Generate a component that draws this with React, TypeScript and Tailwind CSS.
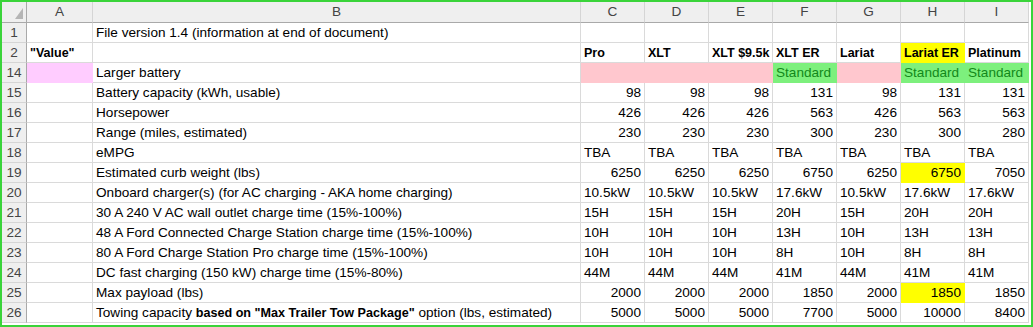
import React from "react";

type Cell = { v?: string; fill?: string; bold?: boolean; right?: boolean; green?: boolean };

const PINK = "#ffc7ce";
const YEL = "#ffff00";
const GRN = "#7df07d";

const cols = ["A", "B", "C", "D", "E", "F", "G", "H", "I"];

const num = (arr: (string | number)[], hl?: number): Cell[] =>
  arr.map((x, i) => ({ v: String(x), right: true, fill: i === hl ? YEL : undefined }));
const txt = (arr: string[]): Cell[] => arr.map((x) => ({ v: x }));

const rows: { n: number; a?: Cell; b: React.ReactNode; cells: Cell[] }[] = [
  { n: 1, b: "File version 1.4 (information at end of document)", cells: Array(7).fill({}) },
  {
    n: 2,
    a: { v: '"Value"', bold: true },
    b: "",
    cells: ["Pro", "XLT", "XLT $9.5k", "XLT ER", "Lariat", "Lariat ER", "Platinum"].map((x) => ({
      v: x,
      bold: true,
      fill: x === "Lariat ER" ? YEL : undefined,
    })),
  },
  {
    n: 14,
    a: { fill: "#ffccff" },
    b: "Larger battery",
    cells: [
      { fill: PINK },
      { fill: PINK },
      { fill: PINK },
      { v: "Standard", fill: GRN, green: true },
      { fill: PINK },
      { v: "Standard", fill: GRN, green: true },
      { v: "Standard", fill: GRN, green: true },
    ],
  },
  { n: 15, b: "Battery capacity (kWh, usable)", cells: num([98, 98, 98, 131, 98, 131, 131]) },
  { n: 16, b: "Horsepower", cells: num([426, 426, 426, 563, 426, 563, 563]) },
  { n: 17, b: "Range (miles, estimated)", cells: num([230, 230, 230, 300, 230, 300, 280]) },
  { n: 18, b: "eMPG", cells: txt(Array(7).fill("TBA")) },
  { n: 19, b: "Estimated curb weight (lbs)", cells: num([6250, 6250, 6250, 6750, 6250, 6750, 7050], 5) },
  {
    n: 20,
    b: "Onboard charger(s) (for AC charging - AKA home charging)",
    cells: txt(["10.5kW", "10.5kW", "10.5kW", "17.6kW", "10.5kW", "17.6kW", "17.6kW"]),
  },
  { n: 21, b: "30 A 240 V AC wall outlet charge time (15%-100%)", cells: txt(["15H", "15H", "15H", "20H", "15H", "20H", "20H"]) },
  { n: 22, b: "48 A Ford Connected Charge Station charge time (15%-100%)", cells: txt(["10H", "10H", "10H", "13H", "10H", "13H", "13H"]) },
  { n: 23, b: "80 A Ford Charge Station Pro charge time (15%-100%)", cells: txt(["10H", "10H", "10H", "8H", "10H", "8H", "8H"]) },
  { n: 24, b: "DC fast charging (150 kW) charge time (15%-80%)", cells: txt(["44M", "44M", "44M", "41M", "44M", "41M", "41M"]) },
  { n: 25, b: "Max payload (lbs)", cells: num([2000, 2000, 2000, 1850, 2000, 1850, 1850], 5) },
  {
    n: 26,
    b: (
      <>
        Towing capacity <b className="text-[12.6px]">based on "Max Trailer Tow Package"</b> option (lbs, estimated)
      </>
    ),
    cells: num([5000, 5000, 5000, 7700, 5000, 10000, 8400]),
  },
];

function DataCell({ c }: { c: Cell }) {
  return (
    <div
      className={`h-5 border-r border-b px-[3px] pt-[1px] flex items-center overflow-hidden whitespace-nowrap ${
        c.right ? "justify-end" : "justify-start"
      } ${c.bold ? "font-bold text-[12.5px]" : ""}`}
      style={{
        background: c.fill ?? "#ffffff",
        borderColor: c.fill ?? "#dadada",
        color: c.green ? "#12891a" : "#000000",
      }}
    >
      {c.v}
    </div>
  );
}

export default function App() {
  return (
    <div className="w-[1033px] h-[327px] border-2 border-[#3ad43a] bg-white overflow-hidden font-['Liberation_Sans',Arial,sans-serif] text-[13.6px] text-black">
      <div className="grid grid-cols-[25px_66px_488px_repeat(7,64px)]">
        {/* column header */}
        <div className="h-[21px] bg-[#efefef] border-r border-b border-[#a9a9a9] relative">
          <svg className="absolute right-[3px] bottom-[3px]" width="8" height="11" viewBox="0 0 8 11">
            <polygon points="8,0 8,11 0,11" fill="#b5b5b5" />
          </svg>
        </div>
        {cols.map((c) => (
          <div
            key={c}
            className="h-[21px] bg-[#efefef] border-r border-r-[#d5d5d5] border-b border-b-[#a9a9a9] flex items-center justify-center text-[#444]"
          >
            {c}
          </div>
        ))}

        {rows.map((r) => (
          <React.Fragment key={r.n}>
            <div className="h-5 bg-[#efefef] border-r border-r-[#a9a9a9] border-b border-b-[#d5d5d5] pt-[1px] flex items-center justify-center text-[#444]">
              {r.n}
            </div>
            <DataCell c={r.a ?? {}} />
            <div className="h-5 border-r border-b border-[#dadada] px-[3px] pt-[1px] flex items-center whitespace-nowrap overflow-hidden">
              <span>{r.b}</span>
            </div>
            {r.cells.map((c, i) => (
              <DataCell key={i} c={c} />
            ))}
          </React.Fragment>
        ))}
      </div>
    </div>
  );
}
